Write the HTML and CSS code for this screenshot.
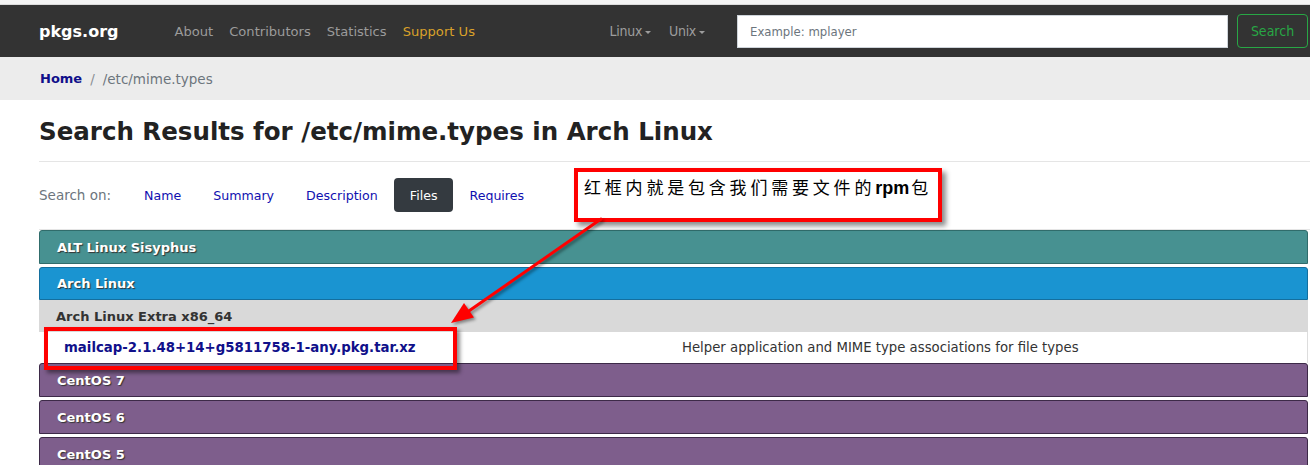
FILE: index.html
```html
<!DOCTYPE html>
<html lang="en">
<head>
<meta charset="utf-8">
<title>pkgs.org - /etc/mime.types</title>
<link rel="stylesheet" href="styles.css">
</head>
<body>
<div class="topstrip"></div>
<nav class="navbar">
  <a class="brand" href="#">pkgs.org</a>
  <ul class="nav">
    <li><a href="#">About</a></li>
    <li><a href="#">Contributors</a></li>
    <li><a href="#">Statistics</a></li>
    <li><a class="support" href="#">Support Us</a></li>
  </ul>
  <ul class="nav nav-right">
    <li><a href="#">Linux<span class="caret"></span></a></li>
    <li><a href="#">Unix<span class="caret"></span></a></li>
  </ul>
  <form class="search">
    <input class="search-input" type="text" placeholder="Example: mplayer">
    <button class="search-btn" type="button">Search</button>
  </form>
</nav>
<div class="breadcrumb">
  <a class="crumb-home" href="#">Home</a>
  <span class="crumb-sep">/</span>
  <span class="crumb-current">/etc/mime.types</span>
</div>
<main class="container">
  <h1 class="title">Search Results for /etc/mime.types in Arch Linux</h1>
  <hr class="rule">
  <div class="search-on">
    <span class="search-label">Search on:</span>
    <a class="pill" href="#">Name</a>
    <a class="pill" href="#">Summary</a>
    <a class="pill" href="#">Description</a>
    <a class="pill active" href="#">Files</a>
    <a class="pill" href="#">Requires</a>
  </div>
  <hr class="rule">
  <div class="panels">
    <section class="panel teal"><div class="panel-head">ALT Linux Sisyphus</div></section>
    <section class="panel blue">
      <div class="panel-head">Arch Linux</div>
      <div class="sub-head">Arch Linux Extra x86_64</div>
      <div class="pkg-row">
        <a class="pkg-link" href="#">mailcap-2.1.48+14+g5811758-1-any.pkg.tar.xz</a>
        <span class="pkg-desc">Helper application and MIME type associations for file types</span>
      </div>
    </section>
    <section class="panel purple"><div class="panel-head">CentOS 7</div></section>
    <section class="panel purple"><div class="panel-head">CentOS 6</div></section>
    <section class="panel purple"><div class="panel-head">CentOS 5</div></section>
  </div>
</main>

<div class="callout"><span class="cjk">红框内就是包含我们需要文件的</span><span class="rpm">rpm</span><span class="cjk">包</span></div>
<div class="highlight-box"></div>
<svg class="arrow" width="1310" height="465" viewBox="0 0 1310 465" aria-hidden="true">
  <line x1="601" y1="219" x2="466" y2="313" stroke="#ff0000" stroke-width="3" stroke-linecap="round"/>
  <polygon points="451,323 474,317.5 464,303" fill="#ff0000"/>
</svg>
</body>
</html>
```
FILE: styles.css
```css
* { box-sizing: border-box; }
html, body { margin: 0; padding: 0; }
body {
  width: 1310px;
  height: 465px;
  overflow: hidden;
  position: relative;
  background: #fff;
  font-family: "DejaVu Sans", Verdana, sans-serif;
  font-size: 13px;
  color: #333;
}
a { text-decoration: none; }

.topstrip {
  height: 5px;
  background: #f4f4f4;
  border-bottom: 1px solid #dcdcdc;
}

.navbar {
  height: 52px;
  background: #333333;
  display: flex;
  align-items: center;
  padding: 0 2px 0 39px;
}
.brand {
  color: #fff;
  font-weight: bold;
  font-size: 16px;
  margin-right: 48px;
}
.nav {
  list-style: none;
  margin: 0;
  padding: 0;
  display: flex;
}
.nav li a {
  display: block;
  padding: 0 8px;
  color: #9b9b9b;
  font-size: 13.1px;
}
.nav li a.support { color: #d9a12a; }
.nav-right { margin-left: auto; }
.nav-right li a {
  padding: 0 9px;
  font-family: "DejaVu Sans Condensed", "DejaVu Sans", sans-serif;
  font-size: 14px;
  color: #9d9d9d;
  letter-spacing: -0.3px;
}
.caret {
  display: inline-block;
  width: 0;
  height: 0;
  margin-left: 3px;
  vertical-align: middle;
  border-top: 3px solid #9d9d9d;
  border-left: 3px solid transparent;
  border-right: 3px solid transparent;
}
.search {
  display: flex;
  align-items: center;
  margin-left: 23px;
}
.search-input {
  width: 491px;
  height: 33px;
  border: 1px solid #ced4da;
  background: #fff;
  padding: 0 12px;
  font-family: "DejaVu Sans Condensed", "DejaVu Sans", sans-serif;
  font-size: 13px;
  color: #495057;
}
.search-input::placeholder { color: #6c757d; }
.search-btn {
  margin-left: 9px;
  width: 71px;
  height: 34px;
  background: transparent;
  border: 1px solid #28a745;
  border-radius: 4px;
  color: #28a745;
  font-family: "DejaVu Sans Condensed", "DejaVu Sans", sans-serif;
  font-size: 14px;
  padding: 0;
}

.breadcrumb {
  height: 43px;
  background: #ececec;
  display: flex;
  align-items: center;
  padding-left: 40px;
  font-size: 13.5px;
}
.crumb-home {
  color: #10108a;
  font-weight: bold;
  font-size: 13px;
}
.crumb-sep { color: #8a8f94; margin: 0 8px; }
.crumb-current { color: #6c757d; }

.container { padding-left: 39px; }
.title {
  margin: 16px 0 14px;
  font-size: 24.5px;
  line-height: 31px;
  font-weight: bold;
  color: #222;
}
.rule {
  margin: 0;
  border: 0;
  border-top: 1px solid #e5e5e5;
  height: 0;
}
.search-on {
  display: flex;
  align-items: center;
  height: 67px;
  padding: 16px 0 17px;
}
.search-label { color: #6c757d; margin-right: 17px; font-size: 13.5px; }
.pill {
  display: flex;
  align-items: center;
  height: 34px;
  padding: 0 16px;
  border-radius: 4px;
  color: #1010b0;
  font-size: 12.6px;
}
.pill.active { background: #343a40; color: #fff; }

.panels { margin-right: 2px; }
.panel { margin-bottom: 3px; }
.panel-head {
  height: 34px;
  display: flex;
  align-items: center;
  padding-left: 17px;
  color: #fff;
  font-weight: bold;
  font-size: 13px;
  text-shadow: 1px 1px 1px #333;
  border: 1px solid;
  border-radius: 3px 3px 0 0;
}
.teal .panel-head { background: #479191; border-color: #306c6b; }
.blue { margin-bottom: 0; }
.blue .panel-head { background: #1a94d1; border-color: #146f9e; height: 33px; }
.purple .panel-head { background: #7e5e8c; border-color: #3d2a48; }
.sub-head {
  height: 32px;
  background: #d9d9d9;
  display: flex;
  align-items: center;
  padding-left: 17px;
  font-weight: bold;
  color: #333;
  font-size: 13px;
}
.pkg-row {
  height: 31px;
  display: grid;
  grid-template-columns: 1fr 1fr;
  align-items: center;
  border-right: 1px solid #ddd;
}
.pkg-link {
  padding-left: 25px;
  color: #10108a;
  font-weight: bold;
  font-size: 13.3px;
}
.pkg-desc { padding-left: 9px; color: #333; font-size: 13.25px; }

.callout {
  position: absolute;
  left: 574px;
  top: 168px;
  width: 368px;
  height: 54px;
  background: #fff;
  border: 4px solid #ff0000;
  box-shadow: 4px 4px 5px rgba(0, 0, 0, 0.45);
  padding: 2px 0 0 6px;
  white-space: nowrap;
  color: #000;
}
.cjk {
  font-family: "Noto Sans CJK SC", sans-serif;
  font-size: 17px;
  letter-spacing: 3.8px;
}
.rpm {
  font-family: "Liberation Sans", sans-serif;
  font-weight: bold;
  font-size: 18px;
  margin-right: 2px;
}
.highlight-box {
  position: absolute;
  left: 44px;
  top: 327px;
  width: 413px;
  height: 43px;
  border: 4px solid #ff0000;
  box-shadow: 3px 3px 4px rgba(0, 0, 0, 0.45);
}
.arrow {
  position: absolute;
  left: 0;
  top: 0;
  filter: drop-shadow(2px 2px 1.5px rgba(0, 0, 0, 0.4));
}
```
